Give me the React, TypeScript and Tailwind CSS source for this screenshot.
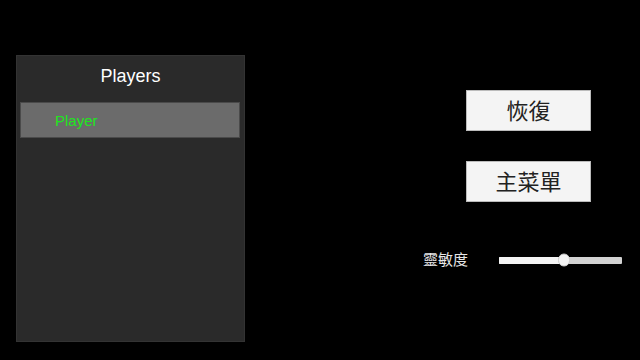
import React from "react";

const value = 53; // slider percent

function MenuButton({ label }: { label: string }) {
  return (
    <button className="ml-[43px] w-[125px] h-[41px] pb-[4px] bg-[#f4f4f4] border border-[#bbb] text-[#222] text-[22px] leading-none flex items-center justify-center font-['Noto_Sans_CJK_TC','Noto_Sans_CJK_SC',sans-serif]">
      {label}
    </button>
  );
}

export default function App() {
  return (
    <div className="w-[640px] h-[360px] bg-black flex overflow-hidden font-['Liberation_Sans',Arial,sans-serif]">
      {/* Players list */}
      <div className="ml-[16px] mt-[55px] w-[229px] h-[287px] bg-[#2a2a2a] border border-[#333] flex flex-col">
        <div className="pt-[8px] text-center text-white text-[18px] leading-[24px]">Players</div>
        <div className="mt-[14px] ml-[3px] w-[220px] h-[36px] bg-[#6b6b6b] border border-[#4a4a4a] flex items-center pl-[34px]">
          <span className="text-[#1ee61e] text-[15px] leading-none">Player</span>
        </div>
      </div>

      {/* Right side controls */}
      <div className="ml-[178px] pt-[90px] flex flex-col gap-[30px]">
        <MenuButton label="恢復" />
        <MenuButton label="主菜單" />
        <div className="mt-[18px] h-[20px] flex items-center">
          <span className="w-[76px] pb-[4px] text-[#e6e6e6] text-[15px] leading-none font-['Noto_Sans_CJK_TC','Noto_Sans_CJK_SC',sans-serif]">
            靈敏度
          </span>
          <div className="relative w-[123px] h-[7px] bg-[#d2d2d2] rounded-[1px]">
            <div className="h-full bg-[#f4f4f4] rounded-[1px]" style={{ width: `${value}%` }} />
            <div
              className="absolute top-1/2 w-[12px] h-[13px] -translate-x-1/2 -translate-y-1/2 rounded-full bg-[#f4f4f4] border border-[#ccc]"
              style={{ left: `${value}%` }}
            />
          </div>
        </div>
      </div>
    </div>
  );
}
